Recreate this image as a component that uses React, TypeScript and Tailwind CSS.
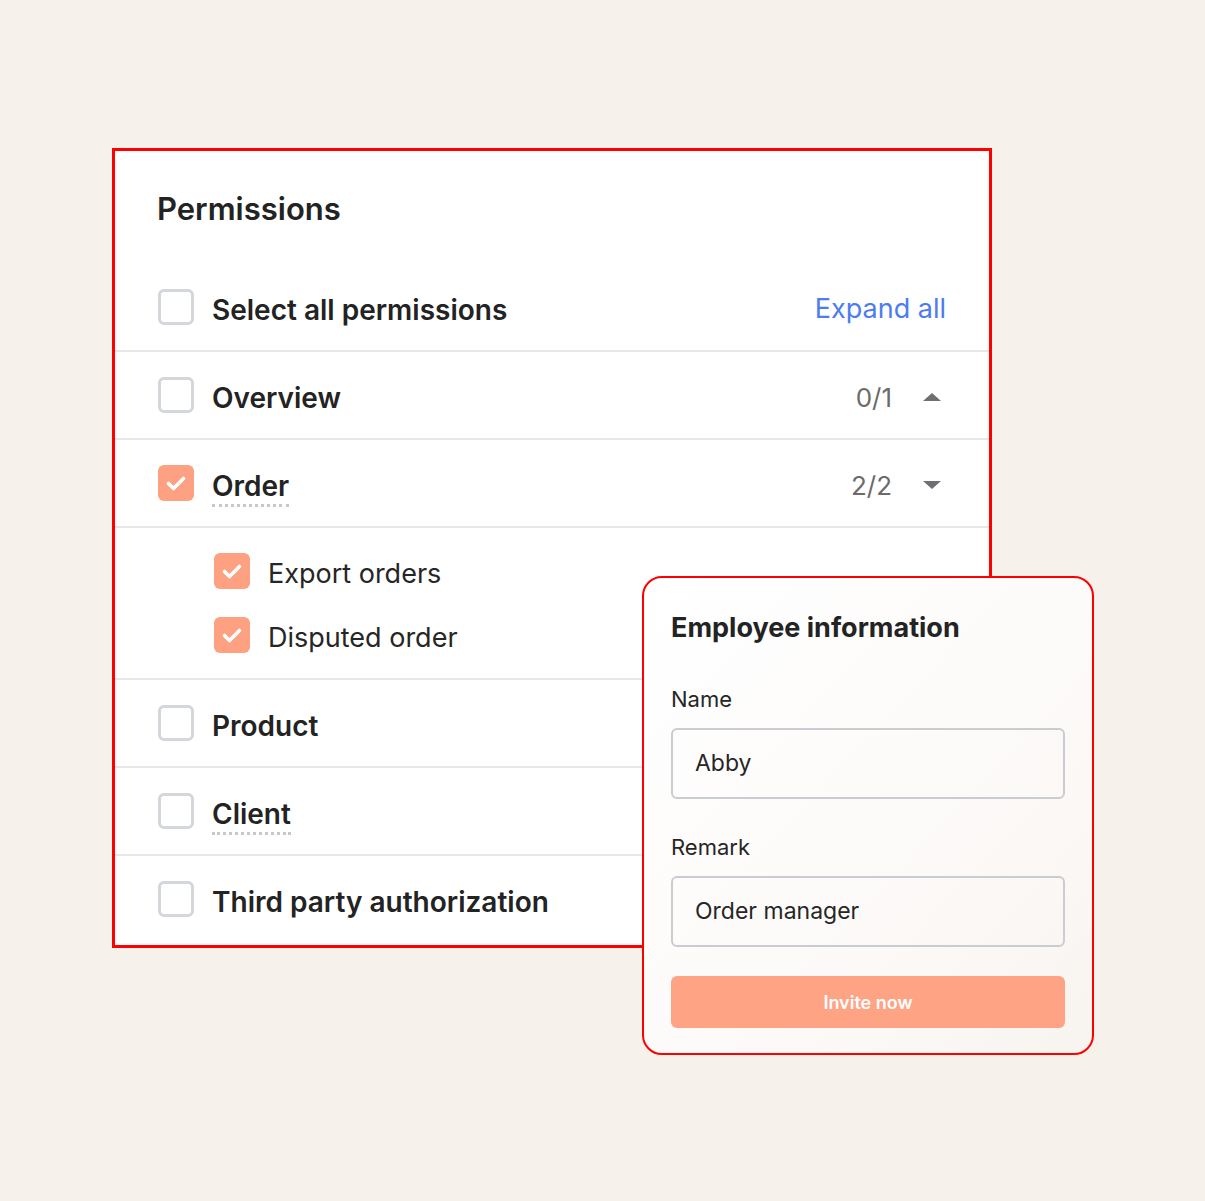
import { ReactNode } from 'react'

const font = { fontFamily: 'Inter, "Noto Sans", sans-serif' }

function Checkbox({ checked }: { checked?: boolean }) {
  if (checked) {
    return (
      <div className="w-9 h-9 shrink-0 rounded-[6px] bg-[#fea183] flex items-center justify-center">
        <svg width="36" height="36" viewBox="0 0 36 36" fill="none">
          <path d="M10.5 18.5 L15.5 23.5 L25.5 13.5" stroke="white" strokeWidth="3.6" strokeLinecap="round" strokeLinejoin="round" />
        </svg>
      </div>
    )
  }
  return <div className="w-9 h-9 shrink-0 rounded-[6px] border-[3px] border-[#d3d6da] bg-white" />
}

function Caret({ up }: { up?: boolean }) {
  return (
    <svg width="20" height="10" viewBox="0 0 20 10" className="shrink-0">
      {up ? <path d="M1 9 L10 1 L19 9 Z" fill="#6d6f73" /> : <path d="M1 1 L10 9 L19 1 Z" fill="#6d6f73" />}
    </svg>
  )
}

function Row({ checked, label, dotted, right, last }: { checked?: boolean; label: string; dotted?: boolean; right?: ReactNode; last?: boolean }) {
  return (
    <div className={`${last ? 'h-[86px]' : 'h-[88px] border-b-2 border-[#e6e7ea]'} px-[43px] flex items-center`}>
      <Checkbox checked={checked} />
      <span
        className={`relative ml-[18px] pt-[5px] text-[28px] font-semibold text-[#232323] ${
          dotted ? "after:content-[''] after:absolute after:left-0 after:right-0 after:bottom-[0px] after:border-b-[3px] after:border-dotted after:border-[#c5c8cd]" : ''
        }`}
      >
        {label}
      </span>
      <div className="ml-auto flex items-center pt-[4px]">{right}</div>
    </div>
  )
}

function Count({ value, up }: { value: string; up?: boolean }) {
  return (
    <div className="flex items-center gap-[30px] pr-[4px]">
      <span className="text-[26px] text-[#6b6b6b]">{value}</span>
      <Caret up={up} />
    </div>
  )
}

function SubItem({ label }: { label: string }) {
  return (
    <div className="h-16 flex items-center">
      <Checkbox checked />
      <span className="ml-[18px] pt-[6px] text-[27px] text-[#262626]">{label}</span>
    </div>
  )
}

function Field({ label, value, first }: { label: string; value: string; first?: boolean }) {
  return (
    <div>
      <div className={`${first ? 'mt-[41px]' : 'mt-[34px]'} text-[22px] leading-[28px] text-[#262626]`}>{label}</div>
      <div className="mt-[15px] h-[71px] rounded-[6px] border-2 border-[#c9ccd1] flex items-center pl-[22px] text-[23px] text-[#262626]">
        {value}
      </div>
    </div>
  )
}

export default function App() {
  return (
    <div className="relative w-[1205px] h-[1201px] bg-[#f6f2eb] overflow-hidden pt-[148px] pl-[112px]" style={font}>
      {/* Permissions card */}
      <div className="w-[880px] h-[800px] border-[3px] border-[#ff0000] bg-white">
        <div className="h-[113px] px-[42px] pt-[4px] flex items-center">
          <h2 className="text-[31px] font-semibold text-[#232323]">Permissions</h2>
        </div>
        <Row label="Select all permissions" right={<span className="text-[27px] text-[#4c7cf0]">Expand all</span>} />
        <Row label="Overview" right={<Count value="0/1" up />} />
        <Row label="Order" checked dotted right={<Count value="2/2" />} />
        <div className="py-[11px] pl-[99px] border-b-2 border-[#e6e7ea]">
          <SubItem label="Export orders" />
          <SubItem label="Disputed order" />
        </div>
        <Row label="Product" />
        <Row label="Client" dotted />
        <Row label="Third party authorization" last />
      </div>

      {/* Employee popup */}
      <div className="absolute left-[642px] top-[576px] w-[452px] h-[479px] rounded-[20px] border-2 border-[#ff0000] bg-gradient-to-br from-white via-[#fdfbfa] to-[#f8f4f0] px-[27px] pt-[34px]">
        <h3 className="text-[27px] leading-[32px] font-bold text-[#232323]">Employee information</h3>
        <Field label="Name" value="Abby" first />
        <Field label="Remark" value="Order manager" />
        <button className="mt-[29px] w-full h-[52px] rounded-[6px] bg-[#ffa385] text-white text-[18px] font-semibold">
          Invite now
        </button>
      </div>
    </div>
  )
}
